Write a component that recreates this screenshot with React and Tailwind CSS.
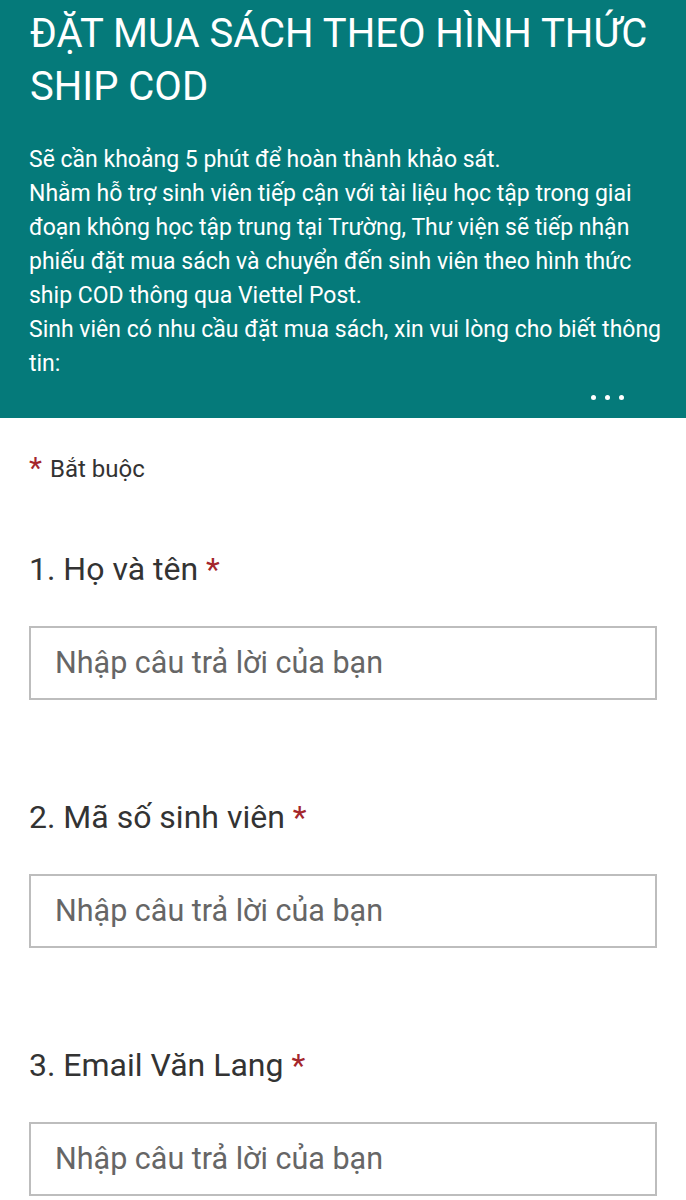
export default function App() {
  const questions = ["1. Họ và tên", "2. Mã số sinh viên", "3. Email Văn Lang"];
  return (
    <div className="w-[686px] min-h-[1200px] bg-white" style={{ fontFamily: "Roboto, 'Noto Sans', sans-serif" }}>
      <div className="bg-[#057a7a] text-white pl-[30px] pr-[20px] pt-[7px] pb-[18px]">
        <h1 className="text-[40px] leading-[53px] font-normal pr-[14px]">ĐẶT MUA SÁCH THEO HÌNH THỨC SHIP COD</h1>
        <div className="mt-[30px] text-[23px] leading-[34px] -ml-[1px]">
          <p>Sẽ cần khoảng 5 phút để hoàn thành khảo sát.</p>
          <p>Nhằm hỗ trợ sinh viên tiếp cận với tài liệu học tập trong giai đoạn không học tập trung tại Trường, Thư viện sẽ tiếp nhận phiếu đặt mua sách và chuyển đến sinh viên theo hình thức ship COD thông qua Viettel Post.</p>
          <p>Sinh viên có nhu cầu đặt mua sách, xin vui lòng cho biết thông tin:</p>
        </div>
        <div className="flex justify-end pr-[42px] gap-[9px] mt-[14px]">
          <span className="w-[5px] h-[5px] rounded-full bg-white"></span>
          <span className="w-[5px] h-[5px] rounded-full bg-white"></span>
          <span className="w-[5px] h-[5px] rounded-full bg-white"></span>
        </div>
      </div>
      <div className="px-[29px] pt-[36px]">
        <div className="flex items-start text-[24px] text-[#333]">
          <span className="text-[#a4262c] text-[30px] leading-[28px] mr-[8px]">*</span>
          <span className="leading-[30px]">Bắt buộc</span>
        </div>
        <div className="mt-[65px] flex flex-col gap-[97px]">
          {questions.map((q) => (
            <div key={q}>
              <div className="text-[32px] leading-[40px] text-[#333]">
                {q} <span className="text-[#a4262c]">*</span>
              </div>
              <div className="mt-[37px] w-[628px] h-[74px] border-2 border-[#bdbdbd] flex items-center pl-[24px]">
                <span className="text-[30.5px] text-[#666]">Nhập câu trả lời của bạn</span>
              </div>
            </div>
          ))}
        </div>
      </div>
    </div>
  );
}
